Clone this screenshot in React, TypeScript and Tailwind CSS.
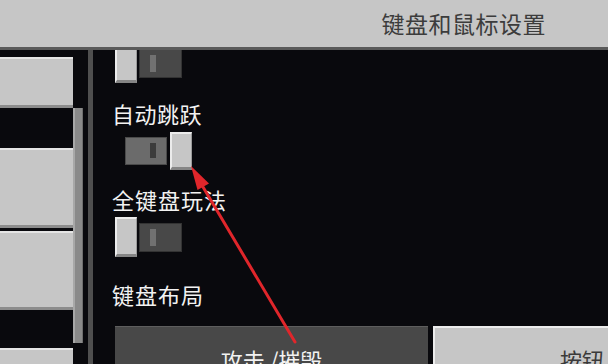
import React from 'react';

const cjk = { fontFamily: '"Noto Sans CJK SC", "Noto Sans", sans-serif' };

function Thumb({ h }: { h: string }) {
  return (
    <div className={`w-[22px] ${h} bg-[#c6c6c6] border-t-2 border-l-2 border-t-[#ececec] border-l-[#ececec] border-b-[3px] border-b-[#858585] border-r border-r-[#9a9a9a]`} />
  );
}

function Toggle({ on }: { on: boolean }) {
  if (on) {
    return (
      <div className="flex items-start pl-[10px]">
        <div className="mt-[5px] w-[42px] h-[28px] bg-[#6b6b6b] border border-[#4a4a4a] relative">
          <div className="absolute left-[24px] top-[5px] w-[6px] h-[15px] bg-[#3c3c3c]" />
        </div>
        <div className="ml-[3px]">
          <Thumb h="h-[38px]" />
        </div>
      </div>
    );
  }
  return (
    <div className="flex items-start">
      <Thumb h="h-[40px]" />
      <div className="ml-[2px] mt-[6px] w-[43px] h-[29px] bg-[#484848] border border-[#333] relative">
        <div className="absolute left-[10px] top-[5px] w-[6px] h-[17px] bg-[#717171]" />
      </div>
    </div>
  );
}

function SideButton({ h, extra }: { h: string; extra?: string }) {
  return (
    <div className={`shrink-0 w-[73px] ${h} bg-[#c6c6c6] border-t-2 border-t-[#e4e4e4] border-b-[3px] border-b-[#8c8c8c] ${extra ?? ''}`} />
  );
}

export default function App() {
  return (
    <div className="w-[608px] h-[364px] overflow-hidden relative bg-[#09090d]" style={cjk}>
      {/* Header */}
      <div className="h-[50px] bg-[#c6c6c6] border-b-[3px] border-[#5a5a5a] flex items-center justify-end pr-[62px]">
        <span className="text-[23px] leading-none text-[#3c3c3c] tracking-[0.5px] -mt-[1px]">键盘和鼠标设置</span>
      </div>

      <div className="flex h-[314px]">
        {/* Left list */}
        <div className="w-[73px] flex flex-col pt-[7px] overflow-hidden">
          <SideButton h="h-[51px]" />
          <SideButton h="h-[80px]" extra="mt-[40px]" />
          <SideButton h="h-[79px]" extra="mt-[3px]" />
          <SideButton h="h-[40px]" extra="mt-[38px]" />
        </div>

        {/* Scrollbar */}
        <div className="w-[10px] pt-[58px]">
          <div className="h-[235px] bg-[#8a8a8a] border-l-2 border-[#a8a8a8] border-r border-r-[#6e6e6e]" />
        </div>

        <div className="w-[5px]" />
        <div className="w-[5px] bg-[#4f4f4f]" />

        {/* Right panel */}
        <div className="flex-1 overflow-hidden flex flex-col pl-[22px] text-[#f2f2f2]">
          <div className="-mt-[7px] shrink-0">
            <Toggle on={false} />
          </div>
          <div className="mt-[19px] -ml-[3px] text-[22px] leading-none tracking-[0.5px] shrink-0">自动跳跃</div>
          <div className="mt-[8px] shrink-0">
            <Toggle on={true} />
          </div>
          <div className="mt-[18px] -ml-[3px] text-[22px] leading-none tracking-[1px] shrink-0">全键盘玩法</div>
          <div className="mt-[7px] shrink-0">
            <Toggle on={false} />
          </div>
          <div className="mt-[26px] -ml-[3px] text-[22px] leading-none tracking-[1px] shrink-0">键盘布局</div>

          <div className="mt-[21px] flex gap-[5px] h-[60px] shrink-0">
            <div className="w-[313px] shrink-0 bg-[#484848] border-t border-t-[#5e5e5e] flex justify-center pt-[21px]">
              <span className="text-[22px] leading-none text-[#f2f2f2]">攻击 /摧毁</span>
            </div>
            <div className="w-[313px] shrink-0 bg-[#c6c6c6] border-t-2 border-l-2 border-[#ececec] flex justify-center pt-[20px]">
              <span className="text-[22px] leading-none text-[#3a3a3a]">按钮 1</span>
            </div>
          </div>
        </div>
      </div>

      {/* Red annotation arrow */}
      <svg className="absolute inset-0 pointer-events-none" width="608" height="364" viewBox="0 0 608 364">
        <line x1="295" y1="342" x2="203" y2="187" stroke="#e0262b" strokeWidth="3" strokeLinecap="round" />
        <polygon points="191,166 197.5,190 209,183.5" fill="#e0262b" />
      </svg>
    </div>
  );
}
